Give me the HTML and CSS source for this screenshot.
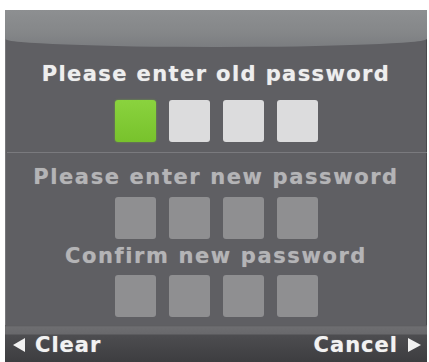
FILE: index.html
```html
<!DOCTYPE html>
<html>
<head>
<meta charset="utf-8">
<link rel="stylesheet" href="styles.css">
</head>
<body>
<div class="panel">
  <div class="header"></div>
  <div class="title bright">Please enter old password</div>
  <div class="pins first">
    <span class="pin green"></span>
    <span class="pin light"></span>
    <span class="pin light"></span>
    <span class="pin light"></span>
  </div>
  <div class="divider"></div>
  <div class="title dim second">Please enter new password</div>
  <div class="pins row2">
    <span class="pin gray"></span>
    <span class="pin gray"></span>
    <span class="pin gray"></span>
    <span class="pin gray"></span>
  </div>
  <div class="title dim third">Confirm new password</div>
  <div class="pins row3">
    <span class="pin gray"></span>
    <span class="pin gray"></span>
    <span class="pin gray"></span>
    <span class="pin gray"></span>
  </div>
  <div class="footer">
    <div class="action"><span class="tri left"></span><span>Clear</span></div>
    <div class="action"><span>Cancel</span><span class="tri right"></span></div>
  </div>
</div>
</body>
</html>
```
FILE: styles.css
```css
html, body {
  margin: 0;
  padding: 0;
  background: #ffffff;
}
body {
  width: 429px;
  height: 362px;
  overflow: hidden;
  font-family: "DejaVu Sans", Verdana, sans-serif;
}
.panel {
  margin: 10px 0 0 5px;
  width: 422px;
  height: 352px;
  background: #5f5f63;
  display: flex;
  flex-direction: column;
  box-shadow: inset 1px 0 0 #77777a, inset -1px 0 0 #4a4a4d;
}
.header {
  height: 37px;
  flex: none;
  background: linear-gradient(#8d8f91, #858789 60%, #7b7d80);
  border-bottom-left-radius: 55% 9px;
  border-bottom-right-radius: 55% 9px;
}
.title {
  font-weight: bold;
  font-size: 21px;
  line-height: 24px;
  letter-spacing: 1.4px;
  text-align: center;
  white-space: nowrap;
}
.bright {
  color: #eeeeee;
  margin-top: 15px;
  text-shadow: 0 0 1px rgba(255, 255, 255, 0.5);
}
.dim {
  color: #b4b4b6;
  letter-spacing: 1.6px;
  text-shadow: 0 0 1px rgba(190, 190, 192, 0.5);
}
.second { margin-top: 12px; }
.third { margin-top: 5px; }
.pins {
  display: flex;
  justify-content: center;
  gap: 13px;
}
.pins.first { margin-top: 14px; }
.pins.row2 { margin-top: 8px; }
.pins.row3 { margin-top: 7px; }
.pin {
  width: 41px;
  height: 42px;
  border-radius: 3px;
}
.green {
  background: linear-gradient(#8ad33e, #78c22c);
  box-shadow: 0 0 2px #6fa83a;
}
.light {
  background: #dcdcdd;
}
.gray {
  background: #8f8f91;
}
.divider {
  height: 1px;
  margin: 10px 0 0 2px;
  background: #7a7a7e;
}
.footer {
  margin-top: auto;
  height: 37px;
  box-sizing: border-box;
  padding: 10px 6px 0 8px;
  background: linear-gradient(#59595c 0, #6d6d70 2px, #69696c 9px, #4d4d50 10px, #3d3d40 100%);
  display: flex;
  justify-content: space-between;
  align-items: flex-start;
}
.action {
  display: flex;
  align-items: center;
  gap: 10px;
  color: #f2f2f2;
  font-weight: bold;
  font-size: 21px;
  line-height: 20px;
  letter-spacing: 1px;
  height: 20px;
  text-shadow: 0 0 1px rgba(255, 255, 255, 0.5);
}
.tri {
  width: 0;
  height: 0;
  border-top: 7px solid transparent;
  border-bottom: 7px solid transparent;
}
.tri.left {
  border-right: 12px solid #f2f2f2;
}
.tri.right {
  border-left: 13px solid #f2f2f2;
}
```
